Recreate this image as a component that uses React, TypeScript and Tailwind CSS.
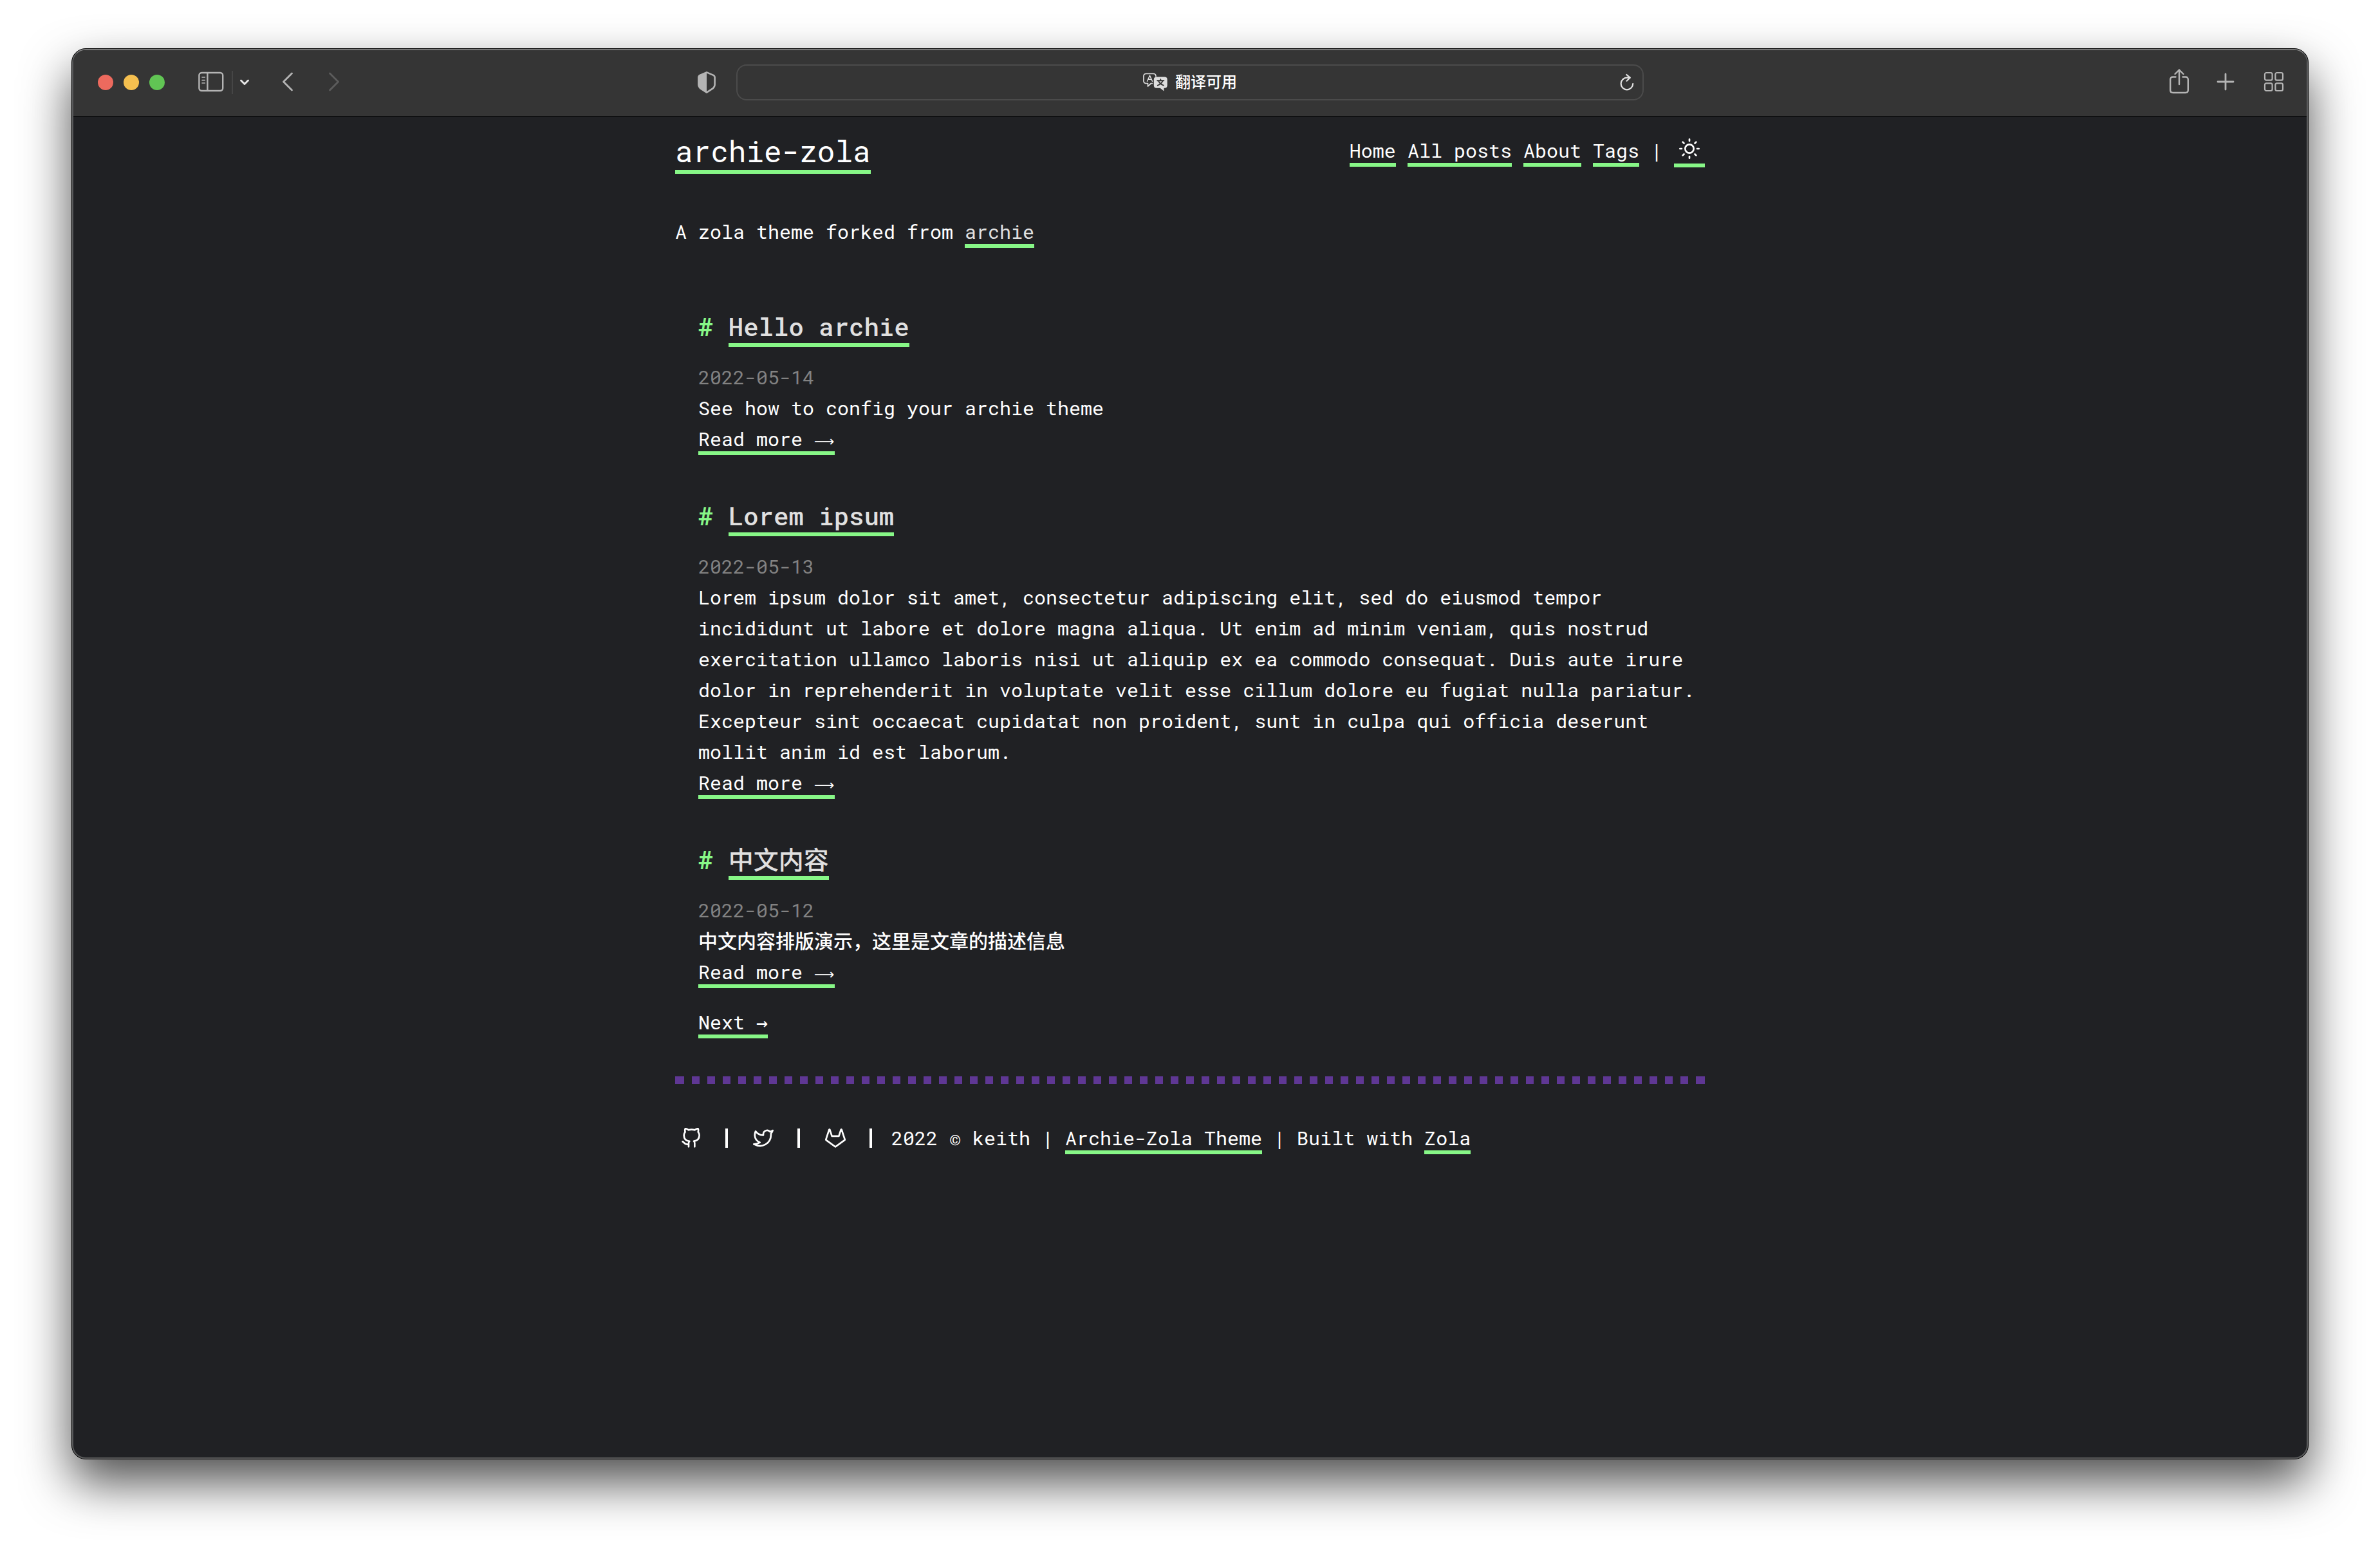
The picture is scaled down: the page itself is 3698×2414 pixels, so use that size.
import type { ReactNode } from "react";

const linkBase =
  "border-b-6 border-[#87f787] hover:bg-[#87f787] hover:text-[#202124]";

function TextLink({ children, muted = false }: { children: ReactNode; muted?: boolean }) {
  return (
    <a href="#" className={muted ? `${linkBase} text-[#e0e0e0]` : linkBase}>
      {children}
    </a>
  );
}

function Feather({ children }: { children: ReactNode }) {
  return (
    <svg
      viewBox="0 0 24 24"
      className="block size-8"
      fill="none"
      stroke="currentColor"
      strokeWidth="2"
      strokeLinecap="round"
      strokeLinejoin="round"
      aria-hidden="true"
    >
      {children}
    </svg>
  );
}

function Toolbar() {
  return (
    <div className="flex h-[103px] items-center rounded-t-[19px] border-b border-black bg-[#353535] pb-0.5 text-[#b4b4b4]">
      <div className="flex flex-1 items-center">
        <div className="ml-[38px] flex gap-4">
          <button aria-label="Close" className="size-6 rounded-full bg-[#ed6a5e]" />
          <button aria-label="Minimize" className="size-6 rounded-full bg-[#f5bf4f]" />
          <button aria-label="Zoom" className="size-6 rounded-full bg-[#61c554]" />
        </div>
        <button aria-label="Sidebar" className="-mt-0.5 ml-[52px]">
          <svg viewBox="0 0 40 32" className="block h-8 w-10" fill="none" stroke="currentColor" strokeWidth="2.4">
            <rect x="1.4" y="2" width="36.8" height="28" rx="4" />
            <path d="M14.4 2v28" />
            <path d="M6 9h4.4M6 13.6h4.4M6 18h4.4" strokeWidth="1.6" strokeLinecap="round" />
          </svg>
        </button>
        <span className="ml-3 h-9 w-0.5 bg-[#464646]" />
        <button aria-label="Sidebar options" className="ml-2.5">
          <svg viewBox="0 0 16 12" className="block h-3 w-4" fill="none" stroke="#e4e4e4" strokeWidth="3" strokeLinecap="round" strokeLinejoin="round">
            <path d="M2.5 3 8 8.5 13.5 3" />
          </svg>
        </button>
        <button aria-label="Back" className="-mt-0.5 ml-[50px]">
          <svg viewBox="0 0 18 30" className="block h-[30px] w-[18px]" fill="none" stroke="currentColor" strokeWidth="2.8" strokeLinecap="round" strokeLinejoin="round">
            <path d="M15.5 2 2.5 15l13 13" />
          </svg>
        </button>
        <button aria-label="Forward" className="-mt-0.5 ml-[54px] text-[#5c5c5c]">
          <svg viewBox="0 0 18 30" className="block h-[30px] w-[18px]" fill="none" stroke="currentColor" strokeWidth="2.8" strokeLinecap="round" strokeLinejoin="round">
            <path d="M2.5 2l13 13-13 13" />
          </svg>
        </button>
        <button aria-label="Privacy report" className="mr-8 ml-auto">
          <svg viewBox="0 0 28 34" className="block h-[34px] w-7">
            <path d="M14 1.4 4 5.6Q1.4 6.8 1.4 9v11.6q0 3.2 3 5.8L14 32.6l9.6-6.2q3-2.6 3-5.8V9q0-2.2-2.6-3.4z" fill="none" stroke="currentColor" strokeWidth="2.6" strokeLinejoin="round" />
            <path d="M14 1.4 4 5.6Q1.4 6.8 1.4 9v11.6q0 3.2 3 5.8L14 32.6z" fill="currentColor" />
          </svg>
        </button>
      </div>

      <div className="flex h-14 w-full max-w-[1410px] items-center rounded-2xl border-2 border-[#4b4b4b] px-3">
        <span className="w-6" />
        <button className="mx-auto flex items-center gap-3 font-['Inter','Noto_Sans_CJK_SC',sans-serif] text-2xl leading-8 font-medium text-white">
          <svg viewBox="0 0 38 30" className="block h-[30px] w-[38px]" fill="none" aria-hidden="true">
            <path d="M14.5 16.5h-2L7.5 21v-4.5H5q-4 0-4-4V5.5q0-4 4-4h11q4 0 4 4" stroke="#dedede" strokeWidth="1.7" strokeLinejoin="round" strokeLinecap="round" />
            <path d="M6.5 13.2 10.5 4.2 14.5 13.2M8 10.2h5" stroke="#dedede" strokeWidth="1.5" strokeLinecap="round" strokeLinejoin="round" />
            <path d="M21 6.5h12.5q4.2 0 4.2 4.2v8.8q0 4.2-4.2 4.2h-1V28.5L26.5 23.7H21q-4.2 0-4.2-4.2v-8.8q0-4.2 4.2-4.2z" fill="#dedede" />
            <path d="M22.3 12.3h10M27.3 10.2v2M24 12.5q1.6 4.7 7.8 7.2M30.6 12.5q-1.6 4.7-7.8 7.2" stroke="#353535" strokeWidth="1.9" strokeLinecap="round" />
          </svg>
          翻译可用
        </button>
        <button aria-label="Reload" className="text-[#e0e0e0]">
          <svg viewBox="0 0 24 28" className="block h-7 w-6" fill="none" stroke="currentColor" strokeWidth="2.2" strokeLinecap="round" strokeLinejoin="round">
            <path d="M21.2 16A9.3 9.3 0 1 1 12 6.7h4.5" />
            <path d="M11.3 2 16.7 6.7l-5.2 5" />
          </svg>
        </button>
      </div>

      <div className="flex flex-1 items-center justify-end">
        <button aria-label="Share" className="-mt-1">
          <svg viewBox="0 0 32 40" className="block h-10 w-8" fill="none" stroke="currentColor" strokeWidth="2.4" strokeLinecap="round" strokeLinejoin="round">
            <path d="M10.5 13.5H6.2q-4 0-4 4V34q0 4 4 4h19.600q4 0 4-4V17.500q0-4-4-4h-4.300" />
            <path d="M16 25V2.500M9.500 9 16 2.500 22.500 9" />
          </svg>
        </button>
        <button aria-label="New tab" className="-mt-0.5 ml-[42px]">
          <svg viewBox="0 0 28 28" className="block size-7" fill="none" stroke="currentColor" strokeWidth="2.8" strokeLinecap="round">
            <path d="M14 2v24M2 14h24" />
          </svg>
        </button>
        <button aria-label="Tab overview" className="-mt-0.5 mr-[35px] ml-[45px]">
          <svg viewBox="0 0 32 32" className="block size-8" fill="none" stroke="currentColor" strokeWidth="2.2">
            <rect x="2" y="2" width="11.6" height="11.6" rx="2.4" />
            <rect x="18.4" y="2" width="11.6" height="11.6" rx="2.4" />
            <rect x="2" y="18.4" width="11.6" height="11.6" rx="2.4" />
            <rect x="18.4" y="18.4" width="11.6" height="11.6" rx="2.4" />
          </svg>
        </button>
      </div>
    </div>
  );
}

const posts = [
  {
    title: "Hello archie",
    date: "2022-05-14",
    text: "See how to config your archie theme",
  },
  {
    title: "Lorem ipsum",
    date: "2022-05-13",
    text: "Lorem ipsum dolor sit amet, consectetur adipiscing elit, sed do eiusmod tempor incididunt ut labore et dolore magna aliqua. Ut enim ad minim veniam, quis nostrud exercitation ullamco laboris nisi ut aliquip ex ea commodo consequat. Duis aute irure dolor in reprehenderit in voluptate velit esse cillum dolore eu fugiat nulla pariatur. Excepteur sint occaecat cupidatat non proident, sunt in culpa qui officia deserunt mollit anim id est laborum.",
  },
  {
    title: "中文内容",
    date: "2022-05-12",
    text: "中文内容排版演示，这里是文章的描述信息",
  },
];

const socials = [
  {
    name: "GitHub",
    d: "M9 19c-5 1.5-5-2.5-7-3m14 6v-3.87a3.37 3.37 0 0 0-.94-2.61c3.14-.35 6.44-1.54 6.44-7A5.44 5.44 0 0 0 20 4.77 5.07 5.07 0 0 0 19.91 1S18.73.65 16 2.48a13.38 13.38 0 0 0-7 0C6.27.65 5.09 1 5.09 1A5.07 5.07 0 0 0 5 4.77a5.44 5.44 0 0 0-1.5 3.78c0 5.42 3.3 6.61 6.44 7A3.37 3.37 0 0 0 9 18.13V22",
  },
  {
    name: "Twitter",
    d: "M23 3a10.9 10.9 0 0 1-3.14 1.53 4.48 4.48 0 0 0-7.86 3v1A10.66 10.66 0 0 1 3 4s-4 9 5 13a11.64 11.64 0 0 1-7 2c9 5 20 0 20-11.5a4.5 4.5 0 0 0-.08-.83A7.72 7.72 0 0 0 23 3z",
  },
  {
    name: "GitLab",
    d: "M22.65 14.39L12 22.13 1.35 14.39a.84.84 0 0 1-.3-.94l1.22-3.78 2.44-7.51A.42.42 0 0 1 4.82 2a.43.43 0 0 1 .58 0 .42.42 0 0 1 .11.18l2.44 7.49h8.1l2.44-7.51A.42.42 0 0 1 18.6 2a.43.43 0 0 1 .58 0 .42.42 0 0 1 .11.18l2.44 7.51L23 13.45a.84.84 0 0 1-.35.94z",
  },
];

export default function App() {
  return (
    <div className="flex min-h-screen bg-white px-[111px] pt-[75px] pb-[147px]">
      <div className="flex flex-1 flex-col rounded-[22px] border border-black bg-[#202124] shadow-[0_36px_76px_rgba(0,0,0,0.69)]">
        <div className="flex flex-1 flex-col rounded-[21px] border-2 border-[#5a5b5c] border-t-[#7a7a7a]">
          <Toolbar />
          <div className="mx-auto w-full max-w-[1600px] font-['Roboto_Mono','DejaVu_Sans_Mono','Noto_Sans_CJK_SC',monospace] text-[30px] leading-[48px] font-[450] text-white">
            <header className="mt-[17px] flex items-center justify-between">
              <h1 className="text-[46px] leading-[72px]">
                <TextLink>archie-zola</TextLink>
              </h1>
              <nav className="flex items-center">
                <span>
                  <TextLink>Home</TextLink> <TextLink>All posts</TextLink>{" "}
                  <TextLink>About</TextLink> <TextLink>Tags</TextLink> |
                </span>
                <button
                  aria-label="Toggle theme"
                  className="ml-[18px] border-b-6 border-[#87f787] px-2 py-[7px]"
                >
                  <Feather>
                    <circle cx="12" cy="12" r="5" />
                    <path d="M12 1v2M12 21v2M4.22 4.22l1.42 1.42M18.36 18.36l1.42 1.42M1 12h2M21 12h2M4.22 19.78l1.42-1.42M18.36 5.64l1.42-1.42" />
                  </Feather>
                </button>
              </nav>
            </header>

            <p className="mt-[66px]">
              A zola theme forked from <TextLink muted>archie</TextLink>
            </p>

            <main className="mt-[99px] px-9">
              <div className="flex flex-col gap-[71px]">
                {posts.map((post) => (
                  <article key={post.date}>
                    <h2 className="text-[39px] leading-[48px] font-[550]">
                      <span className="font-bold text-[#87f787]"># </span>
                      <TextLink muted>{post.title}</TextLink>
                    </h2>
                    <time className="mt-[31px] block text-[#828282]">{post.date}</time>
                    <p className="-mr-9">{post.text}</p>
                    <TextLink>
                      Read more{" "}
                      <span className="font-['DejaVu_Sans',sans-serif] text-[22px] leading-none font-normal">⟶</span>
                    </TextLink>
                  </article>
                ))}
              </div>
              <div className="mt-[30px]">
                <TextLink>Next →</TextLink>
              </div>
            </main>

            <div className="mt-[60px] h-3 border-x-2 border-[#5f3794] bg-[repeating-linear-gradient(to_right,#5f3794_0px,#5f3794_12px,transparent_12px,transparent_24px)]" />

            <footer className="mt-[60px] flex items-center pl-[9px]">
              {socials.map((s) => (
                <span key={s.name} className="flex items-center">
                  <a href="#" aria-label={s.name}>
                    <Feather>
                      <path d={s.d} />
                    </Feather>
                  </a>
                  <span className="mr-[39px] ml-[37px] h-[30px] w-1 bg-white" />
                </span>
              ))}
              <span className="-ml-[9px]">
                2022 © keith | <TextLink>Archie-Zola Theme</TextLink> | Built with{" "}
                <TextLink>Zola</TextLink>
              </span>
            </footer>
          </div>
        </div>
      </div>
    </div>
  );
}
